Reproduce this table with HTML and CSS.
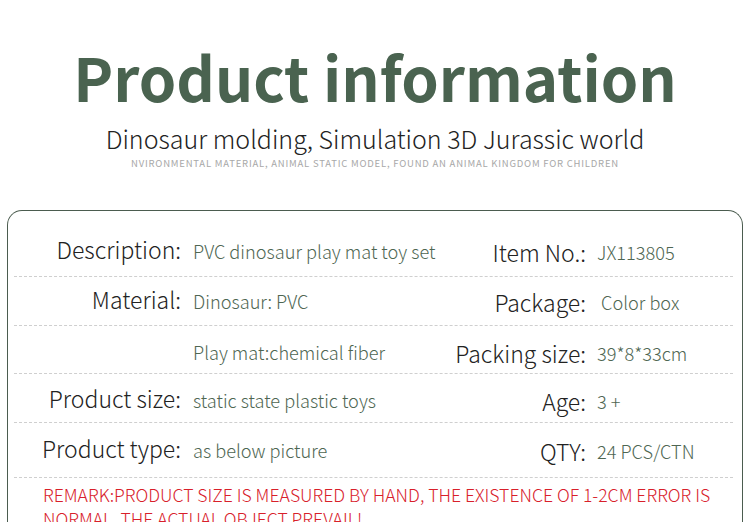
FILE: index.html
```html
<!DOCTYPE html>
<html>
<head>
<meta charset="utf-8">
<link rel="stylesheet" href="styles.css">
</head>
<body>
<header class="head">
  <h1 class="title">Product information</h1>
  <p class="subtitle">Dinosaur molding, Simulation 3D Jurassic world</p>
  <p class="tagline">NVIRONMENTAL MATERIAL, ANIMAL STATIC MODEL, FOUND AN ANIMAL KINGDOM FOR CHILDREN</p>
</header>
<section class="card">
  <div class="row r1">
    <span class="lab">Description:</span><span class="val">PVC dinosaur play mat toy set</span>
    <span class="lab lab2">Item No.:</span><span class="val val2">JX113805</span>
  </div>
  <div class="row r2">
    <span class="lab">Material:</span><span class="val">Dinosaur: PVC</span>
    <span class="lab lab2">Package:</span><span class="val val2 ind">Color box</span>
  </div>
  <div class="row r3">
    <span class="lab"></span><span class="val">Play mat:chemical fiber</span>
    <span class="lab lab2">Packing size:</span><span class="val val2">39*8*33cm</span>
  </div>
  <div class="row r4">
    <span class="lab">Product size:</span><span class="val">static state plastic toys</span>
    <span class="lab lab2">Age:</span><span class="val val2">3 +</span>
  </div>
  <div class="row r5">
    <span class="lab">Product type:</span><span class="val">as below picture</span>
    <span class="lab lab2">QTY:</span><span class="val val2">24 PCS/CTN</span>
  </div>
  <p class="remark">REMARK:PRODUCT SIZE IS MEASURED BY HAND, THE EXISTENCE OF 1-2CM ERROR IS<br>NORMAL, THE ACTUAL OBJECT PREVAIL!</p>
</section>
</body>
</html>
```
FILE: styles.css
```css
html, body {
  margin: 0;
  padding: 0;
  background: #fff;
}
body {
  width: 750px;
  height: 522px;
  overflow: hidden;
  font-family: "Noto Sans CJK SC", "Noto Sans", sans-serif;
}
.head {
  display: flex;
  flex-direction: column;
  align-items: center;
  padding-top: 46px;
}
.title {
  margin: 0;
  font-size: 60px;
  font-weight: 700;
  line-height: 60px;
  color: #4a6350;
  white-space: nowrap;
}
.subtitle {
  margin: 20px 0 0;
  font-size: 25px;
  font-weight: 300;
  line-height: 25px;
  color: #222;
  white-space: nowrap;
}
.tagline {
  margin: 6px 0 0;
  font-size: 9.5px;
  line-height: 12px;
  letter-spacing: 0.78px;
  color: #a8a8a8;
  white-space: nowrap;
}
.card {
  margin: 41px 0 0 7px;
  width: 736px;
  height: 400px;
  box-sizing: border-box;
  border: 1px solid #4b5c4f;
  border-bottom: none;
  border-radius: 15px 15px 0 0;
  padding: 0 9px 0 6px;
}
.row {
  display: flex;
  align-items: center;
  border-bottom: 1px dashed #cfcfcf;
  box-sizing: border-box;
  white-space: nowrap;
}
.r1 { height: 66px; padding-top: 14px; }
.r2 { height: 49px; }
.r3 { height: 48px; padding-top: 4px; }
.r4 { height: 49px; padding-top: 4px; }
.r5 { height: 55px; }
.lab {
  width: 167px;
  text-align: right;
  font-size: 23px;
  font-weight: 300;
  color: #222;
  flex: none;
  position: relative;
  top: -2px;
}
.val {
  width: 220px;
  margin-left: 12px;
  font-size: 18.2px;
  font-weight: 300;
  color: #4e6652;
  flex: none;
}
.lab2 {
  width: 173px;
  margin-left: 0;
  top: 1px;
}
.val2 {
  width: auto;
  margin-left: 11px;
  flex: 1;
  position: relative;
  top: 1px;
}
.ind { padding-left: 4px; }
.remark {
  margin: 0;
  padding: 5px 0 0 29px;
  font-size: 17.6px;
  line-height: 24px;
  font-weight: 300;
  color: #d8202a;
  white-space: nowrap;
}
```
